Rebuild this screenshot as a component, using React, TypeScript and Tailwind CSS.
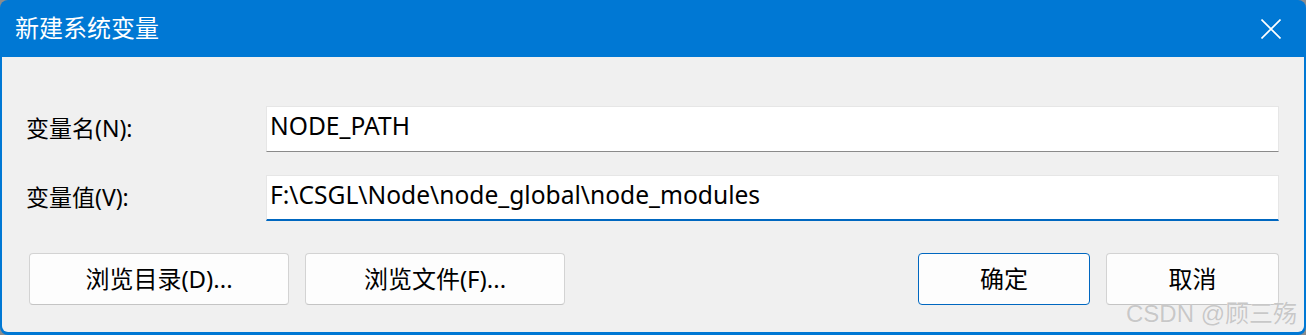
import React, { useState } from "react";

const font = "font-['Noto_Sans','Noto_Sans_CJK_SC',sans-serif]";

const DialogButton = ({ label, width, primary }: { label: string; width: string; primary?: boolean }) => {
  return (
    <button
      className={`${width} h-[52px] rounded-[4px] bg-[#fdfdfd] text-[24px] text-black border ${
        primary ? "border-[#0067c0]" : "border-[#d3d3d3] border-b-[#c4c4c4]"
      }`}
    >
      {label}
    </button>
  );
};

const App = () => {
  const [name, setName] = useState("NODE_PATH");
  const [value, setValue] = useState("F:\\CSGL\\Node\\node_global\\node_modules");

  return (
    <div className={`w-[1306px] h-[335px] bg-[#8c8c8c] ${font}`}>
      <div className="relative h-full flex flex-col rounded-[8px] overflow-hidden bg-[#0078d4]">
        {/* title bar */}
        <div className="h-[57px] shrink-0 flex items-center justify-between pl-[15px] pr-[25px]">
          <span className="text-white text-[24px] leading-none pb-[2px]">新建系统变量</span>
          <svg width="20" height="20" viewBox="0 0 20 20" className="mt-[1px]">
            <path d="M0.5 0.5 L19.5 19.5 M19.5 0.5 L0.5 19.5" stroke="#ffffff" strokeWidth="1.6" fill="none" />
          </svg>
        </div>

        {/* body */}
        <div className="flex-1 mx-[2px] mb-[3px] rounded-b-[6px] bg-[#f0f0f0] pl-[24px] pr-[25px] pt-[49px] flex flex-col">
          <div className="flex items-center h-[46px]">
            <label className="w-[240px] shrink-0 text-[23px] text-black pb-[1px]">变量名(N):</label>
            <input
              value={name}
              onChange={(e) => setName(e.target.value)}
              className="flex-1 h-[46px] bg-white border border-[#e6e6e6] border-b-[#8a8a8a] pl-[3px] pb-[8px] text-[24.6px] text-black outline-none"
            />
          </div>
          <div className="flex items-center h-[46px] mt-[23px]">
            <label className="w-[240px] shrink-0 text-[23px] text-black pb-[1px]">变量值(V):</label>
            <input
              value={value}
              onChange={(e) => setValue(e.target.value)}
              className="flex-1 h-[46px] bg-white border border-[#e6e6e6] border-b-2 border-b-[#0067c0] pl-[3px] pb-[7px] text-[24.6px] text-black outline-none"
            />
          </div>
          <div className="flex items-center mt-[32px] pl-[3px]">
            <div className="flex gap-[16px]">
              <DialogButton label="浏览目录(D)..." width="w-[260px]" />
              <DialogButton label="浏览文件(F)..." width="w-[260px]" />
            </div>
            <div className="flex gap-[16px] ml-auto">
              <DialogButton label="确定" width="w-[172px]" primary />
              <DialogButton label="取消" width="w-[173px]" />
            </div>
          </div>
        </div>

        {/* watermark */}
        <div className="absolute right-[9px] bottom-[9px] text-[24px] leading-none text-[#c8c8c8] font-['Liberation_Sans','Noto_Sans_CJK_SC',sans-serif] [text-shadow:0_0_1px_#ffffff]">
          CSDN @顾三殇
        </div>
      </div>
    </div>
  );
};

export default App;
